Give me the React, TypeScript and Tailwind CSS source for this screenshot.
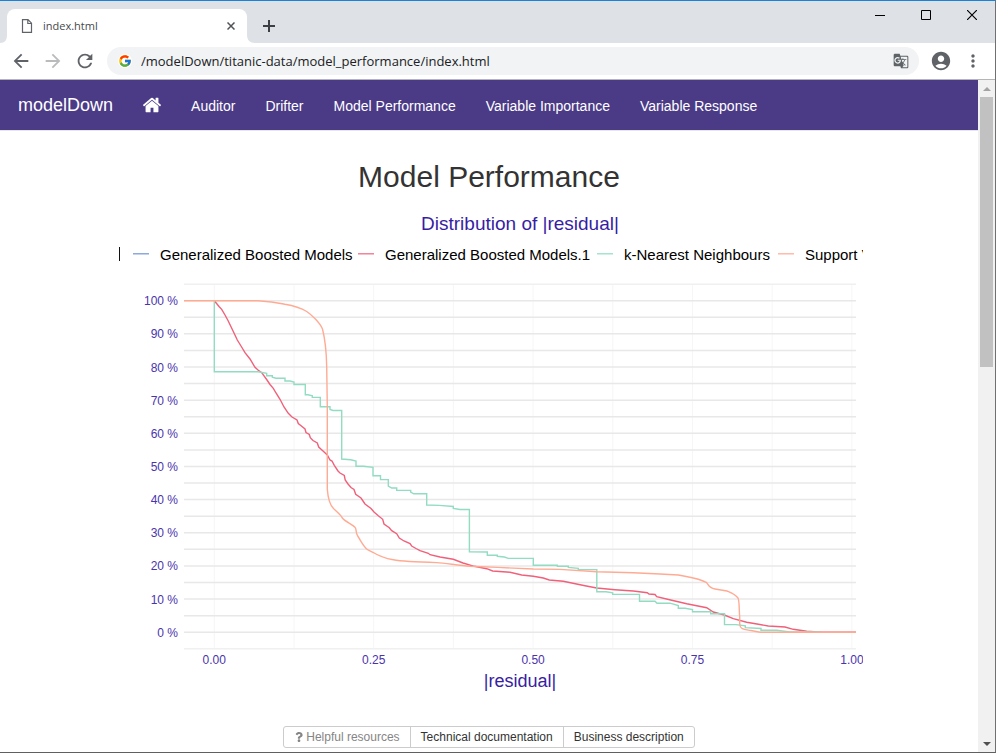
import React from "react";
import { FcGoogle } from "react-icons/fc";
import { FaQuestion } from "react-icons/fa";
import { MdArrowBack, MdArrowForward, MdRefresh, MdAccountCircle, MdMoreVert, MdGTranslate } from "react-icons/md";

const FONT = "font-['Liberation_Sans',Arial,sans-serif]";

/* ---------- chart ---------- */

const LEFT = 184;
const RIGHT = 856;
const xOf = (v: number) => 214.3 + v * 637.6;
const yOf = (p: number) => 632.2 - p * 3.315;

const PERCENTS = [0, 10, 20, 30, 40, 50, 60, 70, 80, 90, 100];
const H_LINES = Array.from({ length: 23 }, (_, i) => -5 + i * 5);
const V_LINES = Array.from({ length: 9 }, (_, i) => i * 0.125);
const X_TICKS = [0, 0.25, 0.5, 0.75, 1];

const BOOSTED =
  "214.3,300.7 217,304 219,306.5 221.7,309.3 225,315 228,320.5 231,326.7 234,333 237.3,340 241,346 245,352.7 250,359 255,367.3 258,370 261.7,372.7 267,380 270,384.5 273.3,388.3 276,393 280,399.3 284,407 288.3,413.3 292,417 297,420 298.3,423.5 302,426.5 305,429 306,432.5 309.3,434.5 310.3,437.7 313,440.5 317.3,443 318.7,447 323,451 327.3,455 330,460 332,461 334.3,465.3 338,471 340,473 344.3,475.5 345.2,480 348,484 351,487.5 354,489.5 355.7,494.3 361,498 363,501 365,504 371,508.5 374,512 378,515.5 382.7,519.3 384,524 389.3,527.7 391.7,530.7 396.7,533.7 399.3,538 404,541 410,543.5 411.7,546 416,548.5 420,550.7 428.3,553.3 430,554.7 440,557 453.3,559.3 463,563 474.3,566.3 486.7,568.7 492.7,571 510,572.3 521.7,575 533.3,576.3 543.3,578 549.3,580 563.3,581.3 585,585.7 596.7,588 615,589.7 633.3,591 647.3,592.7 649,594 655,594.5 656.7,596.7 671.7,600.3 686.7,603.7 706.7,607.7 713.3,612 724.3,615 733.3,618.7 746.7,622.3 757,624 768.3,626 785,627 793.3,629.3 806.7,631.3 821.7,632.2 856,632.2";

const NEIGHBOURS =
  "M214.3 300.7V371.7H258L266.7 373.3V375.7H272.3V377.3L276 378.3H285V381H290L294 382V384.5H305.3V394.7H308L312.3 395.7V397.4H320.3V406.7H330V409.5L333 410.5H341.7V459L350.7 459.8L356 461V466.3H363.5L373 467.3V475.7H380.5V479.6H388.3V486L391.7 488H396.7V490.4H410.7V492L413.7 493.8H426.7V505L439.3 505.4L453.3 506.5V508.5L460 509.5H469.4V551.7L487.3 552V555.3H497.3V556.3L504.3 557L508.3 558.4H533.3V565.2H557.3V566.3H568.3V567.4L578.3 568.4V569.6H596.8V591.7H606L612.7 592.8V594.4H639.5V601.2H655L657 603.2H670L678.3 605.5V608.3H685L692.5 609.5V611.7H710.7V613.7H724.5V624.6H736L745.3 625.8V627.7L761 628.5V630.3H776.7L790 632H820";

const SVM =
  "M184 300.7H258C273 301.5 279 303 285 304.3C292 305.5 300 307.5 306.7 311.5C312 315 320 323 322.5 329C325.5 341 326.5 353 326.7 367L327.3 407V489C328 499 330 505 333.5 508.5C337 512 341 515 342 517.5C345 522 353 524 355.5 528C356.5 530 355.5 533 358 536.5C361.5 542 364 547.5 368 550L373.3 552.5C378 555.5 386 558.5 393.3 559.8C400 561 415 562 436.7 562.6C447 563.5 460 565.5 470 566.2C490 567.2 515 568 533.3 569L560 569.4L596.7 571.8L633.3 572.7L660 574L678.3 575C688 577 699 578 706.7 582.7C708.5 585 709 588 715 589L727 591C732 593 735 594 738 598C739.5 600.5 739 610 739.7 617V624C740 630 745 629.5 751 630.5L760 632.2H856";

const LEGEND = [
  { x: 133, label: "Generalized Boosted Models", color: "#7a9ad6" },
  { x: 358, label: "Generalized Boosted Models.1", color: "#f07088" },
  { x: 597, label: "k-Nearest Neighbours", color: "#96dfc4" },
  { x: 778, label: "Support V", color: "#ffb09c" },
];

function ResidualChart() {
  return (
    <svg
      viewBox="115 205 748 500"
      className={`mt-3 w-full max-w-[748px] overflow-hidden ${FONT}`}
      role="img"
      aria-label="Distribution of |residual|"
    >
      <text x={520} y={230} textAnchor="middle" className="fill-[#371ea3] text-[19px]">
        Distribution of |residual|
      </text>

      <path d="M119.5 247V261" stroke="#111" strokeWidth={1} />
      {LEGEND.map((item) => (
        <g key={item.x}>
          <path d={`M${item.x} 253.8h16`} stroke={item.color} strokeWidth={1.3} />
          <text x={item.x + 27} y={260} className="fill-black text-[15px]">
            {item.label}
          </text>
        </g>
      ))}

      {V_LINES.map((v) => (
        <path key={v} d={`M${xOf(v)} 285V649`} stroke="#f6f6f6" strokeWidth={1} />
      ))}
      {H_LINES.map((p) => (
        <path
          key={p}
          d={`M${LEFT} ${yOf(p)}H${RIGHT}`}
          stroke={p < 0 || p > 100 ? "#f0f0f0" : "#e8e8e8"}
          strokeWidth={1.5}
        />
      ))}

      {PERCENTS.map((p) => (
        <text key={p} x={178} y={yOf(p) + 4.5} textAnchor="end" className="fill-[#4a34ad] text-[12px]">
          {p} %
        </text>
      ))}
      {X_TICKS.map((v) => (
        <text key={v} x={xOf(v)} y={664} textAnchor="middle" className="fill-[#4a34ad] text-[12px]">
          {v.toFixed(2)}
        </text>
      ))}

      <g fill="none" strokeWidth={1.4}>
        <polyline points={BOOSTED} stroke="#f0607a" />
        <path d={NEIGHBOURS} stroke="#92dcc2" />
        <path d={SVM} stroke="#ffab94" />
      </g>

      <text x={520} y={687} textAnchor="middle" className="fill-[#371ea3] text-[18px]">
        |residual|
      </text>
    </svg>
  );
}

/* ---------- browser window ---------- */

function TitleBar() {
  return (
    <header className="flex h-[42px] shrink-0 items-end bg-[#dee1e6]">
      <svg className="size-2 shrink-0" viewBox="0 0 8 8" aria-hidden="true">
        <path d="M8 0V8H0C5 8 7 5 7 0Z" fill="#fff" />
      </svg>
      <div className="-ml-px flex h-[34px] w-[240px] items-center rounded-t-lg bg-white pr-3 pl-[14px]">
        <svg width="12" height="14" viewBox="0 0 12 14" fill="none" stroke="#5f6368" strokeWidth="1.2" aria-hidden="true">
          <path d="M1.5 .7H7L10.5 4.2V13.3H1.5ZM6.8 .7V4.5H10.5" />
        </svg>
        <span className="ml-[10px] flex-1 font-['Open_Sans','Noto_Sans',sans-serif] text-[11px] leading-4 text-[#45494d]">
          index.html
        </span>
        <button type="button" aria-label="Close tab" className="flex size-2 items-center">
          <svg viewBox="0 0 8 8" className="size-2" stroke="#505357" strokeWidth="1.5" aria-hidden="true">
            <path d="M.5 .5L7.5 7.5M7.5 .5L.5 7.5" />
          </svg>
        </button>
      </div>
      <svg className="size-2 shrink-0" viewBox="0 0 8 8" aria-hidden="true">
        <path d="M0 0V8H8C3 8 0 5 0 0Z" fill="#fff" />
      </svg>
      <button type="button" aria-label="New tab" className="mb-[11px] ml-2">
        <svg width="12" height="12" viewBox="0 0 12 12" stroke="#3c4043" strokeWidth="2" aria-hidden="true">
          <path d="M6 0V12M0 6H12" />
        </svg>
      </button>
      <div className="flex flex-1 justify-end gap-9 self-start pt-[9px] pr-[18px]">
        <button type="button" aria-label="Minimize">
          <svg width="10" height="10" viewBox="0 0 10 10" aria-hidden="true">
            <path d="M0 5.5H10" stroke="#000" />
          </svg>
        </button>
        <button type="button" aria-label="Maximize">
          <svg width="10" height="10" viewBox="0 0 10 10" fill="none" aria-hidden="true">
            <path d="M.5 .5H9.5V9.5H.5Z" stroke="#000" />
          </svg>
        </button>
        <button type="button" aria-label="Close window">
          <svg width="10" height="10" viewBox="0 0 10 10" aria-hidden="true">
            <path d="M0 0L10 10M10 0L0 10" stroke="#000" strokeWidth="1.2" />
          </svg>
        </button>
      </div>
    </header>
  );
}

function Toolbar() {
  return (
    <div className="flex h-[37px] shrink-0 items-center border-b border-[#b4b5b7] bg-white pr-3 pl-[10px] text-[22px] text-[#5f6368]">
      <button type="button" aria-label="Back">
        <MdArrowBack />
      </button>
      <button type="button" aria-label="Forward" className="ml-[10px] text-[#b9bbbd]">
        <MdArrowForward />
      </button>
      <button type="button" aria-label="Reload" className="ml-[10px]">
        <MdRefresh />
      </button>
      <div className="ml-[11px] flex h-7 flex-1 items-center rounded-full bg-[#f1f3f4] pr-[10px] pl-[11px]">
        <span className="flex size-[14px] items-center justify-center rounded-full bg-white">
          <FcGoogle size={14} />
        </span>
        <input
          type="text"
          readOnly
          aria-label="Address"
          value="/modelDown/titanic-data/model_performance/index.html"
          className="ml-[9px] min-w-0 flex-1 bg-transparent font-['Open_Sans','Noto_Sans',sans-serif] text-[13px] leading-5 text-[#202124] outline-none"
        />
        <button type="button" aria-label="Translate this page" className="text-[16px]">
          <MdGTranslate />
        </button>
      </div>
      <button type="button" aria-label="Profile" className="ml-[11px]">
        <MdAccountCircle />
      </button>
      <button type="button" aria-label="Menu" className="ml-[11px] text-[20px]">
        <MdMoreVert />
      </button>
    </div>
  );
}

const NAV_LINKS = ["Auditor", "Drifter", "Model Performance", "Variable Importance", "Variable Response"];

function NavBar() {
  return (
    <nav className="flex h-[51px] items-center border-b border-[#e7e7e7] bg-[#4b3b87] pl-[3px] text-sm text-white">
      <a href="#top" className="px-[15px] text-[18px] leading-5">
        modelDown
      </a>
      <a href="#home" aria-label="Home" className="px-[14px]">
        <svg viewBox="0 0 1792 1792" className="size-5" fill="currentColor" aria-hidden="true">
          <path d="M1472 992v480q0 26-19 45t-45 19h-384v-384h-256v384h-384q-26 0-45-19t-19-45v-480q0-1 .5-3t.5-3l575-474 575 474q1 2 1 6zm223-69l-62 74q-8 9-21 11h-3q-13 0-21-7l-692-577-692 577q-12 8-24 7-13-2-21-11l-62-74q-8-10-7-23.5t11-21.5l719-599q32-26 76-26t76 26l244 204v-195q0-14 9-23t23-9h192q14 0 23 9t9 23v408l219 182q10 8 11 21.5t-7 23.5z" />
        </svg>
      </a>
      {NAV_LINKS.map((label) => (
        <a key={label} href="#section" className="px-[15px] pt-[2px] leading-5">
          {label}
        </a>
      ))}
    </nav>
  );
}

function ScrollBar() {
  return (
    <div className="flex w-[17px] shrink-0 flex-col items-center bg-[#f1f1f1]">
      <button type="button" aria-label="Scroll up" className="flex h-[17px] items-center">
        <svg width="8" height="4" viewBox="0 0 8 4" aria-hidden="true">
          <path d="M4 0L8 4H0Z" fill="#a3a3a3" />
        </svg>
      </button>
      <div className="flex w-full flex-1 flex-col px-[2px]">
        <div className="h-[270px] bg-[#c1c1c1]" />
      </div>
      <button type="button" aria-label="Scroll down" className="flex h-[17px] items-center">
        <svg width="8" height="4" viewBox="0 0 8 4" aria-hidden="true">
          <path d="M0 0H8L4 4Z" fill="#505050" />
        </svg>
      </button>
    </div>
  );
}

export default function App() {
  return (
    <div className="flex h-screen flex-col overflow-hidden border-t border-r border-b border-t-[#1883d7] border-r-[#707070] border-b-[#606060] bg-white">
      <TitleBar />
      <Toolbar />
      <div className="flex min-h-0 flex-1">
        <div className={`min-w-0 flex-1 overflow-hidden ${FONT}`}>
          <NavBar />
          <main className="flex flex-col items-center pt-[29px]">
            <h1 className="text-[30px] leading-[33px] text-[#333]">Model Performance</h1>
            <ResidualChart />
            <div className="mt-[21px] flex h-[22px] divide-x divide-[#ccc] rounded-[3px] border border-[#ccc] text-xs leading-[18px] text-[#333]">
              <button type="button" disabled className="flex items-center gap-[2px] px-[10px] text-[#858585]">
                <FaQuestion size={10} />
                Helpful resources
              </button>
              <button type="button" className="px-[10px]">
                Technical documentation
              </button>
              <button type="button" className="px-[10px]">
                Business description
              </button>
            </div>
          </main>
        </div>
        <ScrollBar />
      </div>
    </div>
  );
}
